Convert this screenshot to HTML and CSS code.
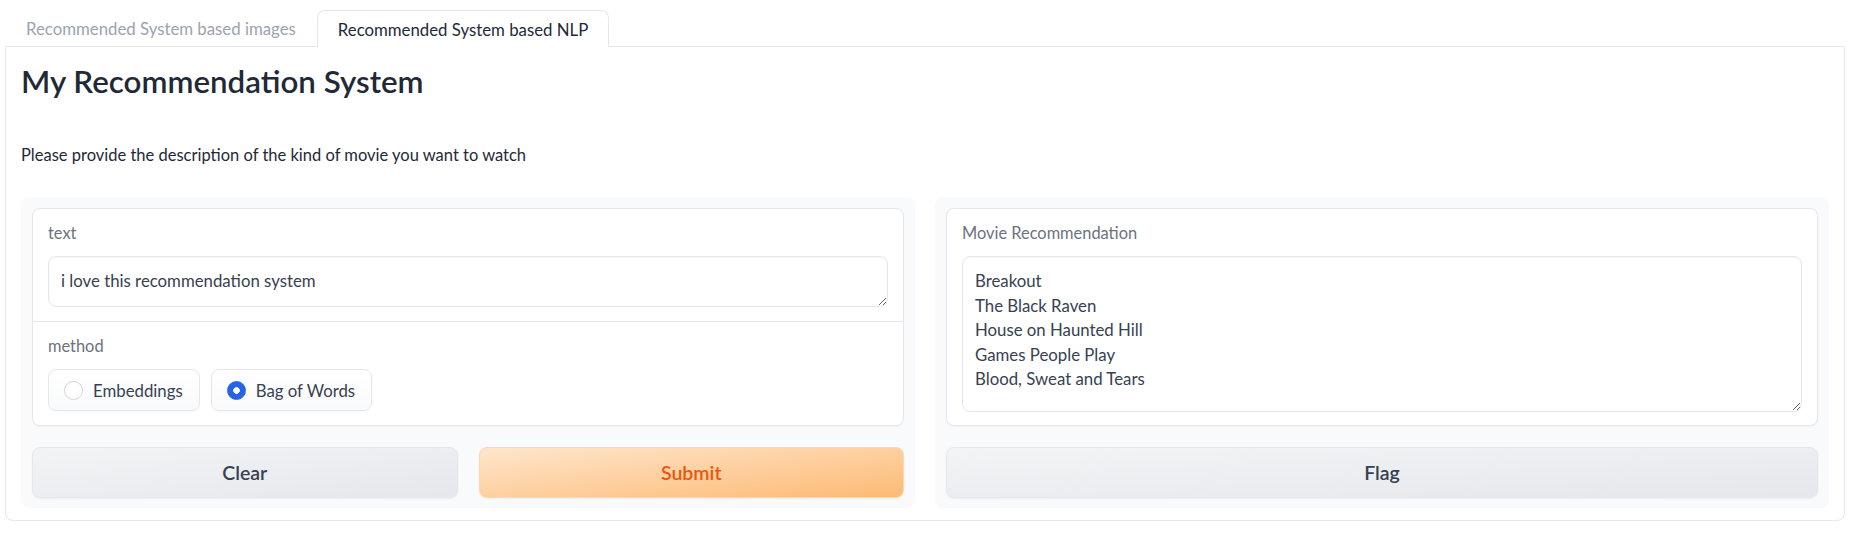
FILE: index.html
```html
<!DOCTYPE html>
<html lang="en">
<head>
<meta charset="utf-8">
<title>My Recommendation System</title>
<link rel="stylesheet" href="styles.css">
</head>
<body>
<div class="app">
  <div class="tab-nav">
    <button class="tab">Recommended System based images</button>
    <button class="tab tab-active">Recommended System based NLP</button>
  </div>
  <div class="tab-panel">
    <h1 class="title">My Recommendation System</h1>
    <p class="desc">Please provide the description of the kind of movie you want to watch</p>
    <div class="row">
      <div class="col">
        <div class="card">
          <div class="block">
            <span class="label">text</span>
            <textarea class="field field-single" rows="1">i love this recommendation system</textarea>
          </div>
          <div class="block block-sep">
            <span class="label">method</span>
            <div class="radios">
              <label class="radio"><span class="dot"></span>Embeddings</label>
              <label class="radio"><span class="dot dot-checked"></span>Bag of Words</label>
            </div>
          </div>
        </div>
        <div class="btn-row">
          <button class="btn btn-secondary">Clear</button>
          <button class="btn btn-primary">Submit</button>
        </div>
      </div>
      <div class="col">
        <div class="card">
          <div class="block block-out">
            <span class="label">Movie Recommendation</span>
            <textarea class="field field-output" rows="6">Breakout
The Black Raven
House on Haunted Hill
Games People Play
Blood, Sweat and Tears</textarea>
          </div>
        </div>
        <div class="btn-row btn-row-single">
          <button class="btn btn-secondary">Flag</button>
        </div>
      </div>
    </div>
  </div>
</div>
</body>
</html>
```

FILE: styles.css
```css
* { box-sizing: border-box; }

html, body {
  margin: 0;
  background: #ffffff;
}

body {
  font-family: Lato, "Liberation Sans", sans-serif;
  color: #374151;
}

.app {
  padding: 10px 11px 12px 5px;
}

/* Tabs */
.tab-nav {
  display: flex;
  height: 36px;
}

.tab {
  font-family: inherit;
  font-size: 16.8px;
  color: #9ca3af;
  background: transparent;
  border: none;
  padding: 2px 21px 0;
  margin: 0;
  height: 36px;
  line-height: 20px;
  cursor: pointer;
}

.tab-active {
  position: relative;
  z-index: 1;
  color: #1f2937;
  background: #ffffff;
  border: 1px solid #e5e7eb;
  border-bottom: none;
  border-radius: 8px 8px 0 0;
  padding: 2px 20px 1px;
  height: 37px;
}

.tab-panel {
  border: 1px solid #e5e7eb;
  border-radius: 0 0 8px 8px;
  padding: 15px 15px 12px;
}

.title {
  margin: 0;
  font-size: 31.3px;
  line-height: 38px;
  font-weight: 600;
  color: #1f2937;
}

.desc {
  margin: 43px 0 0;
  font-size: 16.5px;
  line-height: 24px;
  color: #1f2937;
}

.row {
  margin-top: 30px;
  display: grid;
  grid-template-columns: 1fr 1fr;
  gap: 20px;
}

.col {
  background: #f9fafb;
  border-radius: 8px;
  padding: 11px 11px 10px;
  display: flex;
  flex-direction: column;
  gap: 21px;
}

.card {
  background: #ffffff;
  border: 1px solid #e5e7eb;
  border-radius: 8px;
  box-shadow: 0 1px 2px rgba(0, 0, 0, 0.04);
}

.block {
  padding: 14px 15px;
}

.block-sep {
  border-top: 1px solid #e5e7eb;
}

.block-out {
  padding-bottom: 13px;
}

.label {
  display: block;
  font-size: 16.4px;
  line-height: 20px;
  color: #6b7280;
  margin-bottom: 13px;
}

.field {
  display: block;
  width: 100%;
  margin: 0;
  font-family: inherit;
  font-size: 16.8px;
  color: #374151;
  background: #ffffff;
  border: 1px solid #e5e7eb;
  border-radius: 8px;
  box-shadow: inset 0 1px 2px rgba(0, 0, 0, 0.04);
  padding: 12px 12px 13px;
  resize: vertical;
  outline: none;
  overflow: hidden;
}

.field-single {
  height: 51px;
  line-height: 24px;
}

.field-output {
  height: 156px;
  line-height: 24.5px;
}

.radios {
  display: flex;
  gap: 11px;
}

.radio {
  display: inline-flex;
  align-items: center;
  gap: 10px;
  height: 42px;
  padding: 0 16px 0 15px;
  font-size: 16.8px;
  color: #374151;
  border: 1px solid #e5e7eb;
  border-radius: 8px;
  background: linear-gradient(to bottom, #ffffff, #f9fafb);
  box-shadow: 0 1px 2px rgba(0, 0, 0, 0.03);
}

.dot {
  width: 19px;
  height: 19px;
  border-radius: 50%;
  border: 1px solid #d1d5db;
  background: #ffffff;
  flex: none;
}

.dot-checked {
  border-color: #2563eb;
  background: radial-gradient(circle, #ffffff 0, #ffffff 3px, #2563eb 3.6px);
}

.btn-row {
  display: grid;
  grid-template-columns: 1fr 1fr;
  gap: 21px;
}

.btn-row-single {
  grid-template-columns: 1fr;
}

.btn {
  height: 51px;
  margin: 0;
  font-family: inherit;
  font-size: 19.5px;
  font-weight: 600;
  border-radius: 8px;
  cursor: pointer;
  box-shadow: 0 1px 2px rgba(0, 0, 0, 0.05);
}

.btn-secondary {
  color: #374151;
  border: 1px solid #e5e7eb;
  background: linear-gradient(to bottom right, #f3f4f6, #e5e7eb);
}

.btn-primary {
  color: #ea580c;
  border: 1px solid #fed7aa;
  background: linear-gradient(to bottom right, #fee6cc, #fdba74);
}
```
